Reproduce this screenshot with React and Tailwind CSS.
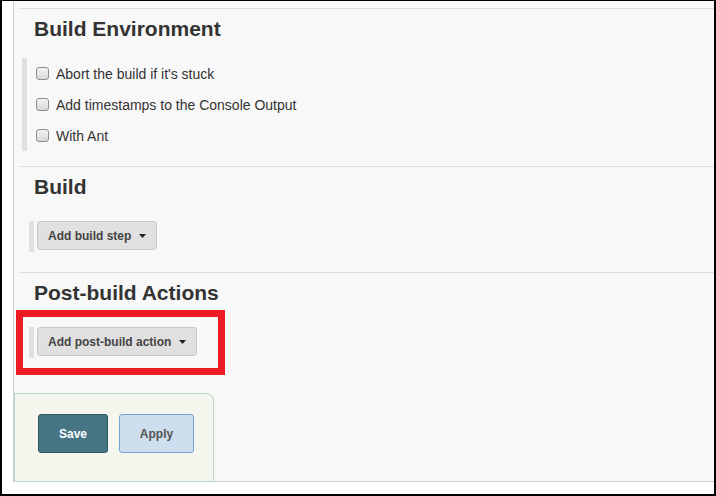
import React from 'react';

const Caret = () => (
  <svg width="7" height="4" viewBox="0 0 7 4" className="ml-[8px] shrink-0">
    <polygon points="0,0 7,0 3.5,4" fill="#222" />
  </svg>
);

const DropdownButton = ({ label }) => (
  <div className="flex h-[31px] ml-[10px]">
    <div className="w-[5px] bg-[#e0e0e0]" />
    <button
      type="button"
      className="ml-[3px] h-[29px] flex items-center px-[10px] bg-[#e0e0e0] border border-[#c8c8c8] rounded-[3px] text-[12px] font-bold text-[#444]"
    >
      {label}
      <Caret />
    </button>
  </div>
);

const Checkbox = ({ label }) => (
  <label className="h-[31px] flex items-center pl-[9px] text-[14px] leading-[16px] text-[#333]">
    <span className="w-[13px] h-[13px] rounded-[3px] border border-[#8e8e8e] bg-gradient-to-b from-[#f4f4f4] to-[#d8d8d8]" />
    <span className="ml-[7px]">{label}</span>
  </label>
);

const Section = ({ title, className = '', children }) => (
  <div className={`ml-[5px] border-t border-[#dcdcdc] pt-[8px] ${className}`}>
    <h2 className="pl-[15px] text-[21px] leading-[24px] font-bold text-[#333]">{title}</h2>
    {children}
  </div>
);

export default function App() {
  return (
    <div className="relative w-[716px] h-[496px] overflow-hidden bg-white border-black border-l-2 border-r-2 border-t border-b-2 font-['Liberation_Sans',Arial,sans-serif]">
      <div className="ml-[11px] h-[481px] flex flex-col bg-[#f8f8f8] border-l border-[#cfcfcf]">
        <Section title="Build Environment" className="mt-[7px] pb-[15px]">
          <div className="mt-[17px] ml-[3px] border-l-[5px] border-[#e0e0e0]">
            <Checkbox label="Abort the build if it's stuck" />
            <Checkbox label="Add timestamps to the Console Output" />
            <Checkbox label="With Ant" />
          </div>
        </Section>

        <Section title="Build" className="pb-[20px]">
          <div className="mt-[22px]">
            <DropdownButton label="Add build step" />
          </div>
        </Section>

        <Section title="Post-build Actions" className="pb-[35px]">
          <div className="mt-[22px]">
            <DropdownButton label="Add post-build action" />
          </div>
        </Section>

        <div className="flex flex-1 items-end">
          <div className="w-[200px] h-[89px] flex items-start gap-[11px] pt-[20px] pl-[23px] bg-[#f5f7ef] border border-[#b7d5c2] rounded-tr-[8px]">
            <button
              type="button"
              className="w-[70px] h-[39px] rounded-[3px] bg-[#467586] border border-[#2e5665] text-white text-[12px] font-bold"
            >
              Save
            </button>
            <button
              type="button"
              className="w-[75px] h-[39px] rounded-[3px] bg-[#cddeee] border border-[#78a2d2] text-[#555] text-[12px] font-bold"
            >
              Apply
            </button>
          </div>
          <div className="flex-1 border-b border-[#cccccc]" />
        </div>
      </div>

      <div className="absolute left-[14px] top-[309px] w-[209px] h-[65px] border-[7px] border-[#ed1c24]" />
    </div>
  );
}
